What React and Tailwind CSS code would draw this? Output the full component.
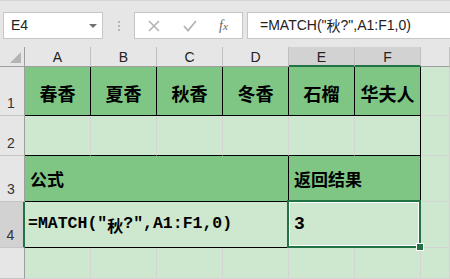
import React from 'react';

const cols = ['A', 'B', 'C', 'D', 'E', 'F', ''];
const heads = ['春香', '夏香', '秋香', '冬香', '石榴', '华夫人'];

const cjk = "font-['Noto_Sans_CJK_SC',sans-serif]";

const RowHead = ({ n, active }) => (
  <div
    className={`flex items-end justify-center pb-[1px] pr-[2px] text-[14px] text-[#333] border-b border-[#c6c6c6] ${
      active ? 'bg-[#d2d2d2] border-r-2 border-r-[#217346]' : 'bg-[#e6e6e6] border-r border-r-[#9e9e9e]'
    }`}
  >
    {n}
  </div>
);

const App = () => {
  return (
    <div className="w-[450px] h-[279px] overflow-hidden bg-[#e6e6e6] font-['Liberation_Sans',sans-serif] flex flex-col">
      {/* Formula bar */}
      <div className="h-[47px] shrink-0 flex items-start pt-[11px] pl-[3px] border-t border-[#d6d6d6]">
        <div className="w-[100px] h-[27px] bg-white border border-[#c6c6c6] flex items-center justify-between pl-[7px] pr-[5px] text-[14px] text-[#222]">
          <span>E4</span>
          <span className="w-0 h-0 border-l-[4px] border-r-[4px] border-t-[4px] border-l-transparent border-r-transparent border-t-[#707070]" />
        </div>
        <div className="w-[31px] h-[27px] flex flex-col items-center justify-center gap-[2px]">
          <span className="w-[2px] h-[2px] bg-[#b5b5b5]" />
          <span className="w-[2px] h-[2px] bg-[#b5b5b5]" />
          <span className="w-[2px] h-[2px] bg-[#b5b5b5]" />
        </div>
        <div className="w-[109px] h-[27px] bg-white border border-[#c6c6c6] flex items-center pl-[13px] gap-0">
          <svg width="12" height="12" viewBox="0 0 12 12" className="mr-[23px]">
            <path d="M1 1 L11 11 M11 1 L1 11" stroke="#b3b3b3" strokeWidth="1.6" />
          </svg>
          <svg width="14" height="12" viewBox="0 0 14 12" className="mr-[22px]">
            <path d="M1 6 L5 10.5 L13 1" stroke="#b3b3b3" strokeWidth="1.8" fill="none" />
          </svg>
          <span className="font-['Liberation_Serif',serif] italic text-[14px] text-[#666] leading-none">
            f<span className="text-[11px]">x</span>
          </span>
        </div>
        <div className="ml-[4px] flex-1 h-[27px] bg-white border border-r-0 border-[#c6c6c6] flex items-center pl-[12px] text-[14px] text-[#222] whitespace-nowrap">
          =MATCH("<span className={cjk}>秋</span>?",A1:F1,0)
        </div>
      </div>

      {/* Sheet */}
      <div className="flex-1 grid grid-cols-[25px_repeat(6,66px)_1fr] grid-rows-[20px_49px_40px_46px_46px_1fr] bg-[#cde8cf]">
        {/* column headers */}
        <div className="relative bg-[#e6e6e6] border-r border-b border-[#9e9e9e]">
          <span className="absolute right-[3px] bottom-[3px] w-0 h-0 border-l-[11px] border-t-[11px] border-l-transparent border-t-transparent border-r-0 border-b-[11px] border-b-[#b4b4b4]" />
        </div>
        {cols.map((c, i) => {
          const active = c === 'E' || c === 'F';
          return (
            <div
              key={i}
              className={`flex items-center justify-center pt-[2px] text-[14px] text-[#222] border-r border-r-[#c0c0c0] ${
                active ? 'bg-[#d2d2d2] border-b-2 border-b-[#217346]' : 'bg-[#e6e6e6] border-b border-b-[#9e9e9e]'
              }`}
            >
              {c}
            </div>
          );
        })}

        {/* row 1 */}
        <RowHead n="1" />
        {heads.map((h) => (
          <div
            key={h}
            className={`flex items-center justify-center pt-[4px] bg-[#7fc684] border-r border-b border-black text-[18px] font-bold text-black ${cjk}`}
          >
            {h}
          </div>
        ))}
        <div className="border-r border-b border-[#d4d4d4]" />

        {/* row 2 */}
        <RowHead n="2" />
        {heads.map((h, i) => (
          <div
            key={i}
            className={`border-b border-b-black border-r ${i === 5 ? 'border-r-black' : 'border-r-[#d4d4d4]'}`}
          />
        ))}
        <div className="border-r border-b border-[#d4d4d4]" />

        {/* row 3 */}
        <RowHead n="3" />
        <div className={`col-span-4 flex items-center pl-[5px] bg-[#7fc684] border-r border-b border-black text-[17px] font-bold text-black ${cjk}`}>
          公式
        </div>
        <div className={`col-span-2 flex items-center pl-[5px] bg-[#7fc684] border-r border-b border-black text-[17px] font-bold text-black ${cjk}`}>
          返回结果
        </div>
        <div className="border-r border-b border-[#d4d4d4]" />

        {/* row 4 */}
        <RowHead n="4" active />
        <div className="col-span-4 flex items-center pl-[3px] border-r border-b border-black text-[16.5px] font-bold text-black font-['Liberation_Mono',monospace] whitespace-nowrap">
          =MATCH("<span className={`${cjk} text-[16px]`}>秋</span>?",A1:F1,0)
        </div>
        <div className="col-span-2 relative flex items-center pl-[5px] border-r border-b border-black text-[18px] font-bold text-black font-['Liberation_Mono',monospace]">
          3
          <div className="absolute -left-[2px] -top-[2px] -right-[1px] -bottom-[1px] border-2 border-[#217346] pointer-events-none">
            <div className="w-full h-full border border-white" />
          </div>
          <span className="absolute -right-[3px] -bottom-[3px] w-[6px] h-[6px] bg-[#217346] outline outline-1 outline-white" />
        </div>
        <div className="border-r border-b border-[#d4d4d4]" />

        {/* row 5 */}
        <RowHead n="" />
        {cols.map((c, i) => (
          <div key={i} className="border-r border-b border-[#d4d4d4]" />
        ))}
      </div>
    </div>
  );
};

export default App;
